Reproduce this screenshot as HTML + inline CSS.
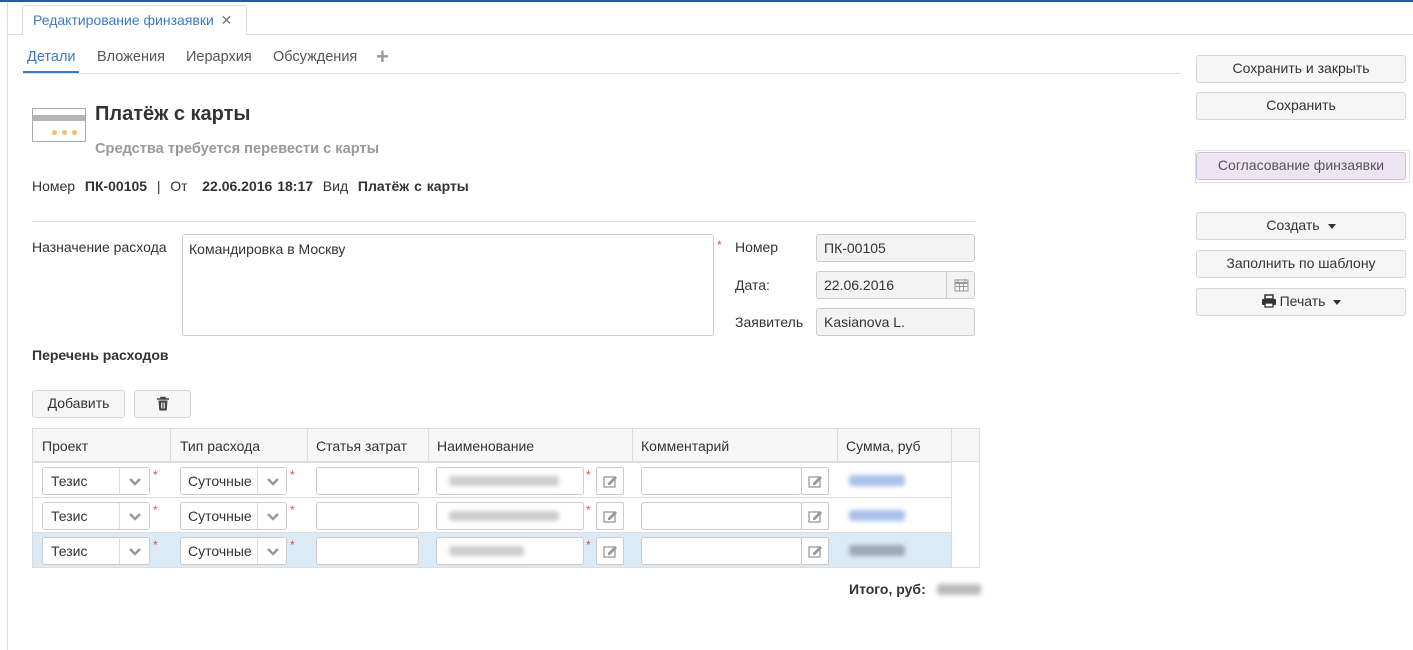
<!DOCTYPE html>
<html><head><meta charset="utf-8"><style>
*{box-sizing:border-box;margin:0;padding:0}
body{width:1413px;height:650px;background:#fff;font-family:"Liberation Sans",Arial,sans-serif;font-size:14px;color:#333;position:relative;overflow:hidden}
.a{position:absolute}
.btn{position:absolute;background:#f6f6f6;border:1px solid #d6d6d6;border-radius:3px;text-align:center;font-size:14px;color:#333;line-height:25px}
.inp{position:absolute;border:1px solid #ccc;border-radius:3px;background:#fff;height:28px}
.ro{background:#f3f3f3}
.star{position:absolute;color:#e74c3c;font-size:12px}
.blob{position:absolute;filter:blur(2.5px);border-radius:3px}
.caret{display:inline-block;width:0;height:0;border-left:4px solid transparent;border-right:4px solid transparent;border-top:5px solid #333;vertical-align:middle;margin-left:8px}
.sel{position:absolute;border:1px solid #ccc;border-radius:3px;background:#fff;height:28px;line-height:26px;padding-left:8px;overflow:hidden;white-space:nowrap}
.sel .dv{position:absolute;top:0;bottom:0;border-left:1px solid #ddd;width:30px;background:#fff}
.eb{position:absolute;width:28px;height:28px;border:1px solid #ccc;border-radius:2px;background:#fff}
</style></head><body>
<div class="a" style="left:0;top:0;width:1413px;height:2px;background:#2a5d9f"></div>
<div class="a" style="left:7px;top:2px;width:1px;height:648px;background:#ddd"></div>
<div class="a" style="left:8px;top:34px;width:1405px;height:1px;background:#ddd"></div>
<div class="a" style="left:22px;top:5px;width:225px;height:30px;border:1px solid #ddd;border-bottom:none;border-radius:3px 3px 0 0;background:#fff;color:#3b7bbf;line-height:28px;padding-left:10px">Редактирование финзаявки <span style="color:#777;margin-left:3px">✕</span></div>

<div class="a" style="left:27px;top:49px;color:#3b7bbf;font-size:14.5px">Детали</div>
<div class="a" style="left:97px;top:49px;color:#555;font-size:14.5px">Вложения</div>
<div class="a" style="left:186px;top:49px;color:#555;font-size:14.5px">Иерархия</div>
<div class="a" style="left:273px;top:49px;color:#555;font-size:14.5px">Обсуждения</div>
<div class="a" style="left:376px;top:44px;color:#999;font-size:22px;font-weight:bold">+</div>
<div class="a" style="left:23px;top:73px;width:1157px;height:1px;background:#ddd"></div>
<div class="a" style="left:23px;top:71px;width:56px;height:2px;background:#3b7bbf"></div>

<div class="a" style="left:32px;top:108px;width:54px;height:34px;border:1px solid #aaa;background:#fff"></div>
<div class="a" style="left:33px;top:115px;width:52px;height:6px;background:#b5b5b5"></div>
<div class="a" style="left:52px;top:130px;width:5px;height:5px;border-radius:50%;background:#f0c070;box-shadow:10px 0 0 #f0c070,20px 0 0 #f0c070"></div>
<div class="a" style="left:95px;top:103px;font-size:20px;font-weight:bold;color:#333">Платёж с карты</div>
<div class="a" style="left:95px;top:141px;font-weight:bold;color:#999;font-size:14.6px">Средства требуется перевести с карты</div>
<div class="a" style="left:32px;top:178px;word-spacing:1px">Номер &nbsp;<b>ПК-00105</b> &nbsp;| &nbsp;От &nbsp;&nbsp;<b>22.06.2016 18:17</b> &nbsp;Вид &nbsp;<b>Платёж с карты</b></div>
<div class="a" style="left:32px;top:221px;width:943px;height:1px;background:#e3e3e3"></div>

<div class="a" style="left:32px;top:239px">Назначение расхода</div>
<div class="inp" style="left:182px;top:234px;width:532px;height:102px;padding:6px 6px">Командировка в Москву</div>
<div class="star" style="left:717px;top:238px">*</div>
<div class="a" style="left:735px;top:239px">Номер</div>
<div class="a" style="left:735px;top:277px">Дата:</div>
<div class="a" style="left:735px;top:314px">Заявитель</div>
<div class="inp ro" style="left:816px;top:234px;width:159px;padding:5px 7px">ПК-00105</div>
<div class="inp ro" style="left:816px;top:271px;width:159px;padding:5px 7px">22.06.2016</div>
<div class="a" style="left:946px;top:272px;width:28px;height:26px;border-left:1px solid #ccc;background:#f3f3f3"><svg width="28" height="26"><rect x="8" y="8" width="13" height="11" fill="none" stroke="#999"/><line x1="8" y1="11" x2="21" y2="11" stroke="#999" stroke-width="2"/><path d="M11 7v3M18 7v3M8 14.5h13M12.5 11v8M16.5 11v8" stroke="#999"/></svg></div>
<div class="inp ro" style="left:816px;top:308px;width:159px;padding:5px 7px">Kasianova L.</div>

<div class="a" style="left:32px;top:347px;font-weight:bold">Перечень расходов</div>
<div class="btn" style="left:32px;top:390px;width:93px;height:28px">Добавить</div>
<div class="btn" style="left:134px;top:390px;width:57px;height:28px"><svg width="18" height="18" style="margin-top:4px"><path d="M3 4h12M7 4V2.5h4V4" stroke="#444" stroke-width="1.6" fill="none"/><path d="M4.5 5.5h9l-.8 10h-7.4z" fill="#444"/><path d="M7.5 7.5v6M9 7.5v6M10.5 7.5v6" stroke="#f6f6f6" stroke-width=".8"/></svg></div>

<div class="a" style="left:32px;top:428px;width:948px;height:140px;border:1px solid #ddd;background:#fff"></div>
<div class="a" style="left:33px;top:429px;width:946px;height:33px;background:#f7f7f7;border-bottom:1px solid #ddd"></div>
<div class="a" style="left:33px;top:497px;width:918px;height:1px;background:#ddd"></div>
<div class="a" style="left:33px;top:462px;width:918px;height:1px;background:#ddd"></div>
<div class="a" style="left:33px;top:532px;width:918px;height:35px;background:#dbeaf7;border-top:1px solid #ddd"></div>
<div class="a" style="left:170px;top:429px;width:1px;height:33px;background:#ddd"></div>
<div class="a" style="left:307px;top:429px;width:1px;height:33px;background:#ddd"></div>
<div class="a" style="left:428px;top:429px;width:1px;height:33px;background:#ddd"></div>
<div class="a" style="left:632px;top:429px;width:1px;height:33px;background:#ddd"></div>
<div class="a" style="left:837px;top:429px;width:1px;height:33px;background:#ddd"></div>
<div class="a" style="left:951px;top:429px;width:1px;height:138px;background:#ddd"></div>
<div class="a" style="left:42px;top:438px">Проект</div>
<div class="a" style="left:180px;top:438px">Тип расхода</div>
<div class="a" style="left:316px;top:438px">Статья затрат</div>
<div class="a" style="left:437px;top:438px">Наименование</div>
<div class="a" style="left:641px;top:438px">Комментарий</div>
<div class="a" style="left:846px;top:438px">Сумма, руб</div>

<div id="rows"></div>
<script>
var tops=[467,502,537],nw=[110,110,75];
var h="";
var chev='<svg width="30" height="26"><path d="M10 11l5 5 5-5" stroke="#999" stroke-width="2.5" fill="none"/></svg>';
var ed='<svg width="26" height="26"><rect x="7" y="9" width="11" height="10" fill="none" stroke="#999" stroke-width="1.3"/><path d="M11 15l7-7 2 2-7 7h-2z" fill="#999"/></svg>';
tops.forEach(function(t,i){
h+='<div class="sel" style="left:42px;top:'+t+'px;width:108px">Тезис<div class="dv" style="left:76px">'+chev+'</div></div>';
h+='<div class="star" style="left:153px;top:'+(t+1)+'px">*</div>';
h+='<div class="sel" style="left:180px;top:'+t+'px;width:107px;padding-left:7px">Суточные<div class="dv" style="left:76px">'+chev+'</div></div>';
h+='<div class="star" style="left:290px;top:'+(t+1)+'px">*</div>';
h+='<div class="inp" style="left:316px;top:'+t+'px;width:103px"></div>';
h+='<div class="inp" style="left:436px;top:'+t+'px;width:148px"><div class="blob" style="left:12px;top:8px;width:'+nw[i]+'px;height:10px;background:#ccc"></div></div>';
h+='<div class="star" style="left:586px;top:'+(t+1)+'px">*</div>';
h+='<div class="eb" style="left:596px;top:'+t+'px">'+ed+'</div>';
h+='<div class="inp" style="left:641px;top:'+t+'px;width:161px"></div>';
h+='<div class="eb" style="left:801px;top:'+t+'px">'+ed+'</div>';
h+='<div class="blob" style="left:849px;top:'+(t+8)+'px;width:56px;height:11px;background:'+(i==2?'#9aa8b8':'#a9c0ea')+'"></div>';
});
document.getElementById('rows').innerHTML=h;
</script>
<div class="a" style="left:849px;top:581px;font-weight:bold">Итого, руб:</div>
<div class="blob" style="left:937px;top:584px;width:44px;height:11px;background:#bbb"></div>

<div class="btn" style="left:1196px;top:55px;width:210px;height:28px">Сохранить и закрыть</div>
<div class="btn" style="left:1196px;top:92px;width:210px;height:28px">Сохранить</div>
<div class="a" style="left:1195px;top:150px;width:215px;height:33px;border:1px solid #f6d4e0"></div>
<div class="btn" style="left:1196px;top:152px;width:210px;height:28px;background:#ede5f1;border-color:#c9c0dc;color:#555">Согласование финзаявки</div>
<div class="btn" style="left:1196px;top:212px;width:210px;height:28px">Создать<span class="caret"></span></div>
<div class="btn" style="left:1196px;top:250px;width:210px;height:28px">Заполнить по шаблону</div>
<div class="btn" style="left:1196px;top:288px;width:210px;height:28px"><svg width="16" height="14" style="vertical-align:-2px;margin-right:3px"><rect x="4" y="1" width="8" height="4" fill="none" stroke="#333" stroke-width="1.5"/><rect x="1" y="5" width="14" height="6" rx="1" fill="#333"/><rect x="4" y="9" width="8" height="4" fill="#fff" stroke="#333" stroke-width="1.3"/></svg>Печать<span class="caret"></span></div>
</body></html>
